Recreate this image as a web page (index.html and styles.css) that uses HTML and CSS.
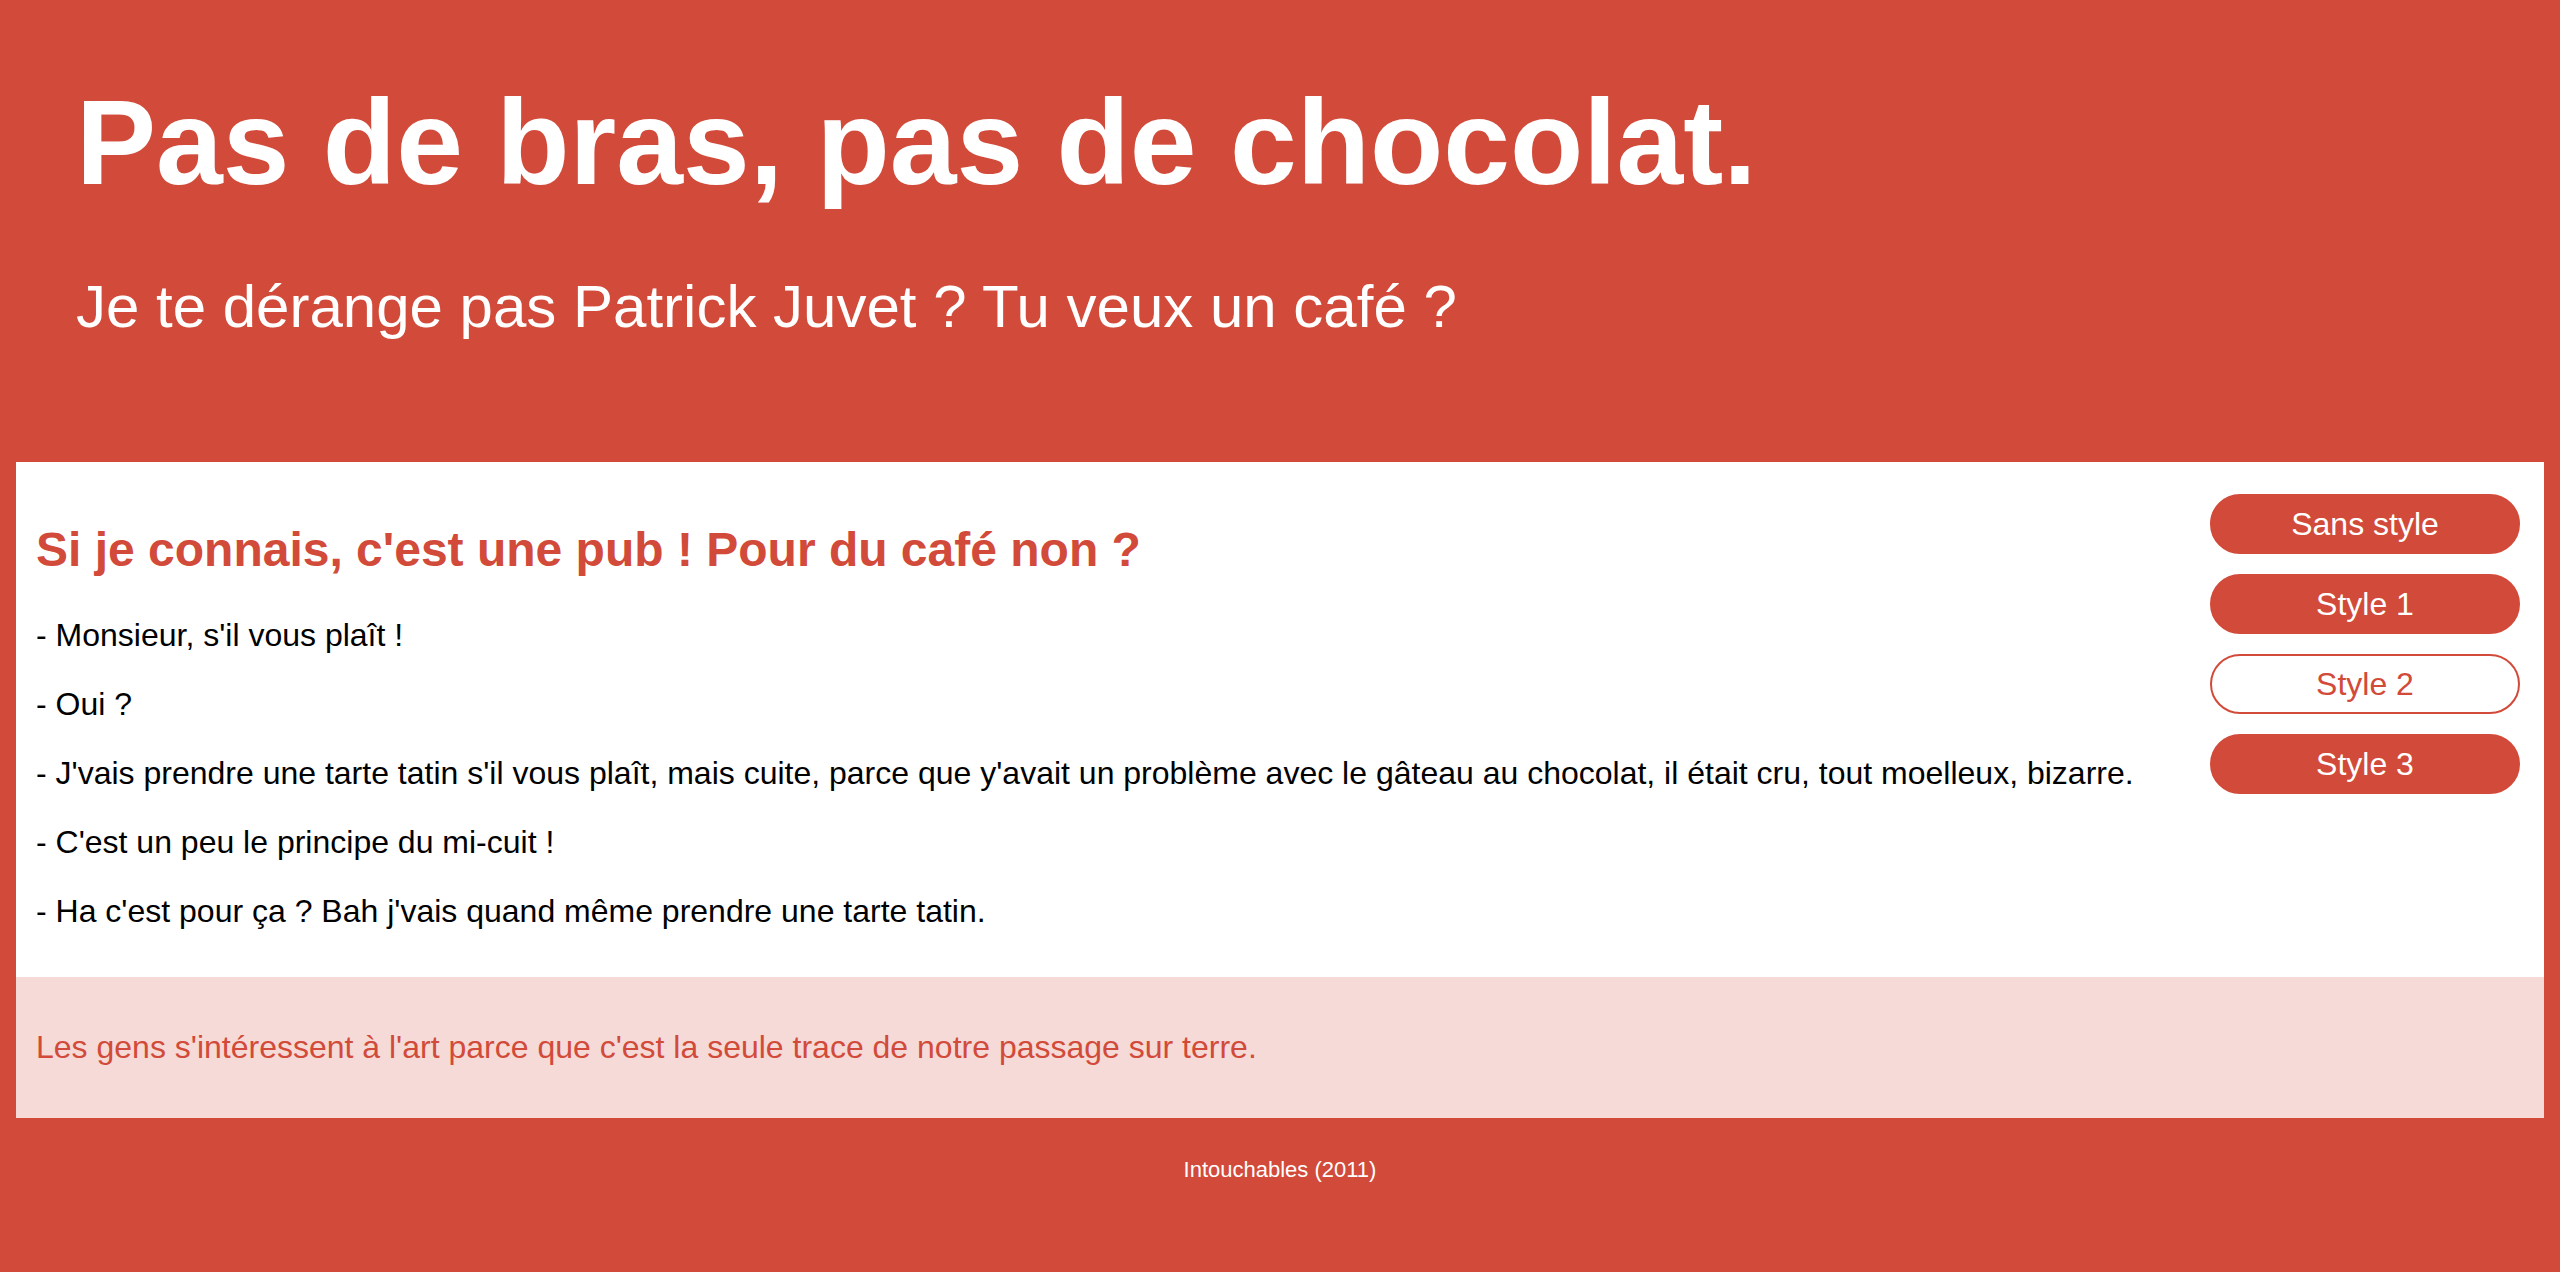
FILE: index.html
```html
<!DOCTYPE html>
<html lang="fr">
<head>
<meta charset="utf-8">
<title>Pas de bras, pas de chocolat.</title>
<link rel="stylesheet" href="styles.css">
</head>
<body>
<header class="hero">
  <h1 class="hero-title">Pas de bras, pas de chocolat.</h1>
  <p class="hero-sub">Je te dérange pas Patrick Juvet ? Tu veux un café ?</p>
</header>
<main class="panel">
  <section class="content">
    <h2 class="content-title">Si je connais, c'est une pub ! Pour du café non ?</h2>
    <p class="line">- Monsieur, s'il vous plaît !</p>
    <p class="line">- Oui ?</p>
    <p class="line">- J'vais prendre une tarte tatin s'il vous plaît, mais cuite, parce que y'avait un problème avec le gâteau au chocolat, il était cru, tout moelleux, bizarre.</p>
    <p class="line">- C'est un peu le principe du mi-cuit !</p>
    <p class="line">- Ha c'est pour ça ? Bah j'vais quand même prendre une tarte tatin.</p>
  </section>
  <aside class="styles">
    <button class="btn">Sans style</button>
    <button class="btn">Style 1</button>
    <button class="btn btn-outline">Style 2</button>
    <button class="btn">Style 3</button>
  </aside>
</main>
<section class="quote">
  <p class="quote-text">Les gens s'intéressent à l'art parce que c'est la seule trace de notre passage sur terre.</p>
</section>
<footer class="footer">Intouchables (2011)</footer>
</body>
</html>
```

FILE: styles.css
```css
html, body {
  margin: 0;
  padding: 0;
}
body {
  background: #d24a39;
  font-family: "Liberation Sans", Arial, Helvetica, sans-serif;
  color: #000;
  min-height: 1272px;
}
.hero {
  padding: 73px 60px 0 76px;
  color: #fff;
}
.hero-title {
  margin: 0 0 61px;
  font-size: 120px;
  font-weight: bold;
  line-height: normal;
}
.hero-sub {
  margin: 0;
  padding-bottom: 121px;
  font-size: 60px;
  line-height: normal;
}
.panel {
  margin: 0 16px;
  background: #fff;
  display: flex;
  align-items: flex-start;
}
.content {
  flex: 1;
  padding: 20px 20px 15px;
}
.content-title {
  margin: 40px 0;
  font-size: 48px;
  font-weight: bold;
  color: #d24a39;
  line-height: normal;
}
.line {
  margin: 32px 0;
  font-size: 32px;
  line-height: normal;
}
.styles {
  flex: 0 0 310px;
  padding: 32px 24px 0 0;
  display: flex;
  flex-direction: column;
  gap: 20px;
}
.btn {
  height: 60px;
  border: 2px solid #d24a39;
  border-radius: 30px;
  background: #d24a39;
  color: #fff;
  font-family: "Liberation Sans", Arial, Helvetica, sans-serif;
  font-size: 32px;
  padding: 0;
  cursor: pointer;
}
.btn-outline {
  background: #fff;
  color: #d24a39;
}
.quote {
  margin: 0 16px;
  background: #f5dad7;
  padding: 20px;
}
.quote-text {
  margin: 32px 0;
  font-size: 32px;
  color: #d24a39;
  line-height: normal;
}
.footer {
  padding: 39px 0 40px;
  text-align: center;
  color: #fff;
  font-size: 22px;
  line-height: normal;
}
```
